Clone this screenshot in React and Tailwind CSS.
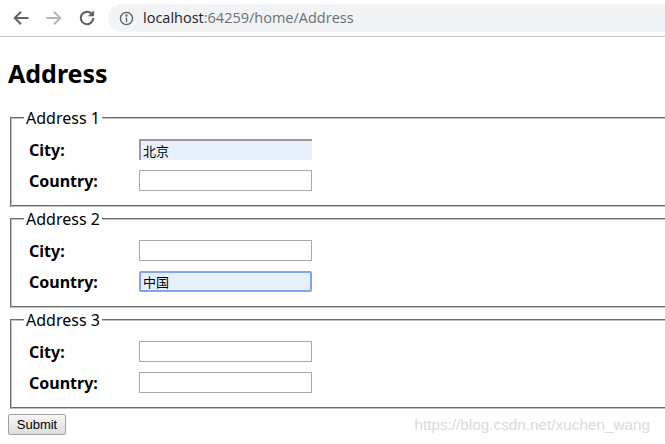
import React from "react";

const rows = [
  { id: 1, city: "北京", country: "", cityFill: true },
  { id: 2, city: "", country: "中国", countryFocus: true },
  { id: 3, city: "", country: "" },
];

function Field({ label, value, fill, focus }) {
  let cls =
    "h-[21px] w-[173px] px-[2px] text-[13px] text-black outline-none [font-family:'Noto_Sans_CJK_SC',sans-serif] ";
  if (focus) cls += "border-2 border-[#7fa5ea] rounded-[2px] bg-[#e8f0fe] px-[1px]";
  else if (fill) cls += "border-t-2 border-l-2 border-[#9a9a9a] bg-[#e8f0fe]";
  else cls += "border border-[#a9a9a9] bg-white";
  return (
    <div className="flex items-center h-[21px]">
      <span className="w-[110px] font-bold text-[16px]">{label}</span>
      <input className={cls} defaultValue={value} readOnly />
    </div>
  );
}

export default function App() {
  return (
    <div className="w-[665px] h-[444px] overflow-hidden bg-white [font-family:'Noto_Sans',sans-serif] text-black">
      {/* browser bar */}
      <div className="h-[37px] flex items-center border-b border-[#c8c8c8]">
        <div className="flex items-center w-[108px] pl-[11px] gap-[13px]">
          <svg width="20" height="20" viewBox="0 0 24 24" fill="none" stroke="#5f6368" strokeWidth="2.4">
            <path d="M21 12H5M12 4.5L4.5 12l7.5 7.5" />
          </svg>
          <svg width="20" height="20" viewBox="0 0 24 24" fill="none" stroke="#b4b4b4" strokeWidth="2.4">
            <path d="M3 12h16M12 4.5l7.5 7.5-7.5 7.5" />
          </svg>
          <svg width="20" height="20" viewBox="0 0 24 24" fill="none" stroke="#5f6368" strokeWidth="2.6">
            <path d="M19.5 12a7.5 7.5 0 1 1-2.2-5.3" />
            <path d="M20 3.5v6h-6z" fill="#5f6368" strokeWidth="1" />
          </svg>
        </div>
        <div className="flex-1 h-[28px] rounded-l-full bg-[#f1f3f4] flex items-center pl-[11px] gap-[9px]">
          <svg width="15" height="15" viewBox="0 0 16 16" fill="none" stroke="#5f6368" strokeWidth="1.5">
            <circle cx="8" cy="8" r="6.5" />
            <path d="M8 7v4.5" />
            <circle cx="8" cy="4.8" r="0.5" fill="#5f6368" />
          </svg>
          <span className="text-[14.5px] [font-family:'Open_Sans',sans-serif]">
            <span className="text-[#202124]">localhost</span>
            <span className="text-[#6b6f73]">:64259/home/Address</span>
          </span>
        </div>
      </div>

      {/* page */}
      <div className="px-[8px] relative">
        <h1 className="text-[25px] font-bold leading-[32px] mt-[20px] mb-[18px]">Address</h1>

        <div className="w-[700px] flex flex-col gap-[1px] pl-[2px]">
          {rows.map((r) => (
            <fieldset
              key={r.id}
              className="border-2 [border-style:groove] border-[#c0c0c0] px-[17px] pb-[14px] pt-0"
            >
              <legend className="px-[2px] text-[16px] leading-[22px] ml-[-5px]">Address {r.id}</legend>
              <div className="flex flex-col gap-[10px] mt-[10px]">
                <Field label="City:" value={r.city} fill={r.cityFill} />
                <Field label="Country:" value={r.country} focus={r.countryFocus} />
              </div>
            </fieldset>
          ))}
        </div>

        <div className="flex items-center justify-between mt-[3px]">
          <button className="h-[21px] w-[58px] border border-[#a0a0a0] rounded-[2px] bg-gradient-to-b from-[#f6f6f6] to-[#dedede] text-[13px] [font-family:'Liberation_Sans',sans-serif] text-black">
            Submit
          </button>
          <span className="mr-[7px] mt-[2px] text-[15.3px] [font-family:'Liberation_Sans',sans-serif] text-[#dadada]">
            https://blog.csdn.net/xuchen_wang
          </span>
        </div>
      </div>
    </div>
  );
}
